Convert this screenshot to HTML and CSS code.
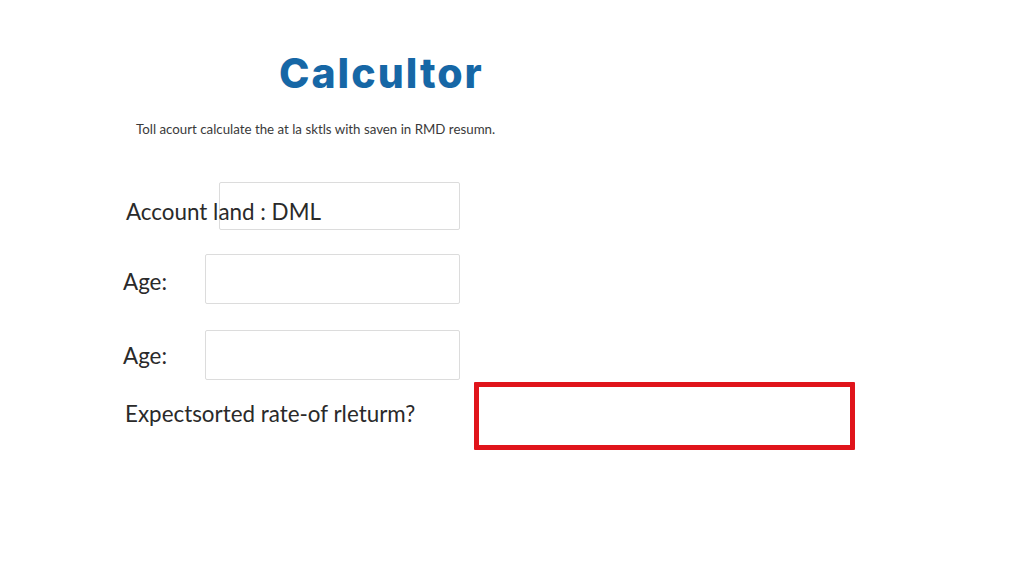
FILE: index.html
```html
<!DOCTYPE html>
<html lang="en">
<head>
<meta charset="utf-8">
<title>Calcultor</title>
<link rel="stylesheet" href="styles.css">
</head>
<body>
<main class="page">
  <header class="header">
    <h1 class="title">Calcultor</h1>
    <p class="intro">Toll acourt calculate the at la sktls with saven in RMD resumn.</p>
  </header>
  <form class="form">
    <div class="row row-account">
      <label class="label" for="account">Account land : DML</label>
      <input class="field" id="account" type="text">
    </div>
    <div class="row row-age">
      <label class="label" for="age1">Age:</label>
      <input class="field" id="age1" type="text">
    </div>
    <div class="row row-age row-age-2">
      <label class="label" for="age2">Age:</label>
      <input class="field" id="age2" type="text">
    </div>
    <div class="row row-rate">
      <label class="label" for="rate">Expectsorted rate-of rleturm?</label>
      <input class="field field-error" id="rate" type="text">
    </div>
  </form>
</main>
</body>
</html>
```
FILE: styles.css
```css
* { box-sizing: border-box; }

html, body {
  margin: 0;
  background: #ffffff;
}

body {
  font-family: Lato, "Liberation Sans", sans-serif;
  color: #2b2b2b;
}

.page {
  width: 1024px;
  height: 585px;
  padding-top: 49px;
}

/* heading block */
.header {
  display: flex;
  flex-direction: column;
}

.title {
  margin: 0 0 0 279px;
  font-family: Inter, "Liberation Sans", sans-serif;
  font-weight: 800;
  font-size: 41px;
  line-height: 48px;
  color: #1667a6;
  letter-spacing: 2px;
}

.intro {
  margin: 22px 0 0 136px;
  font-size: 13.3px;
  line-height: 20px;
  color: #3a3a3a;
}

/* form rows */
.form {
  display: flex;
  flex-direction: column;
  margin-top: 43px;
  padding-left: 123px;
}

.row {
  display: flex;
  align-items: center;
}

.label {
  position: relative;
  z-index: 1;
  font-size: 22.4px;
  color: #2a2a2a;
  white-space: nowrap;
}

.field {
  display: block;
  margin: 0;
  padding: 0 10px;
  border: 1px solid #dcdcdc;
  border-radius: 2px;
  background: transparent;
  font: inherit;
  outline: none;
}

.row-account {
  height: 48px;
}
.row-account .label {
  width: 93px;
  margin-left: 3px;
  padding-top: 10px;
}
.row-account .field {
  width: 241px;
  height: 48px;
}

.row-age {
  height: 50px;
  margin-top: 24px;
}
.row-age .label {
  width: 82px;
  padding-top: 4px;
}
.row-age .field {
  width: 255px;
  height: 50px;
}

.row-age-2 {
  margin-top: 26px;
}
.row-age-2 .label {
  padding-top: 0;
}

.row-rate {
  height: 68px;
  margin-top: 2px;
}
.row-rate .label {
  width: 349px;
  margin-left: 2px;
  padding-bottom: 6px;
}
.field-error {
  width: 381px;
  height: 68px;
  border: 5px solid #e0141b;
  border-radius: 1px;
}
```
